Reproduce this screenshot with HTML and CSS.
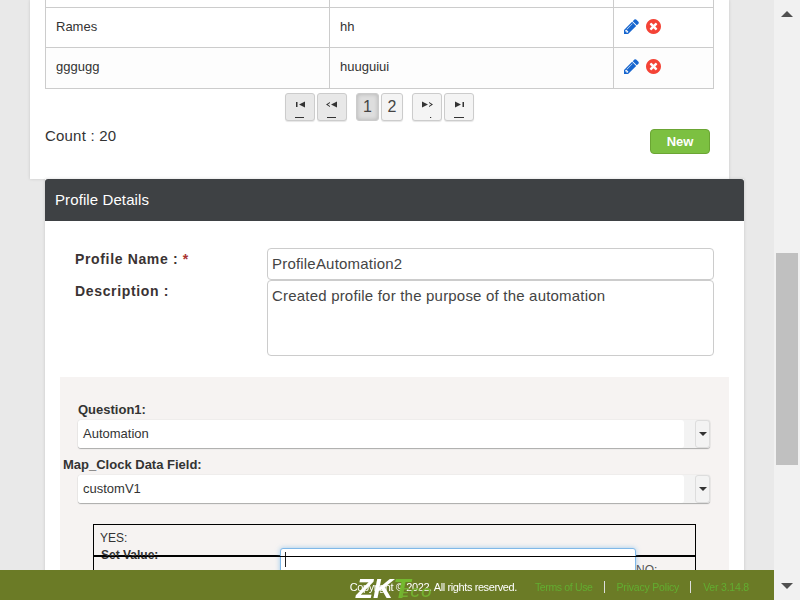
FILE: index.html
```html
<!DOCTYPE html>
<html lang="en">
<head>
  <meta charset="UTF-8">
  <meta name="viewport" content="width=device-width, initial-scale=1.0">
  <link rel="stylesheet" href="styles.css">
</head>
<body>
  <div class="layout">
    <div class="page">
      <div class="list-panel">
        <table class="grid">
          <tr class="row-cut"><td></td><td></td><td></td></tr>
          <tr>
            <td>Rames</td>
            <td>hh</td>
            <td class="actions">
              <svg class="icon pen" viewBox="128 128 1536 1536"><path d="M491 1536l91-91-235-235-91 91v107h128v128h107zm523-928q0-22-22-22-10 0-17 7l-542 542q-7 7-7 17 0 22 22 22 10 0 17-7l542-542q7-7 7-17zm-54-192l416 416-832 832h-416v-416zm683 96q0 53-37 90l-166 166-416-416 166-165q36-38 90-38 53 0 91 38l235 234q37 39 37 91z"/></svg>
              <svg class="icon del" viewBox="0 128 1536 1536"><path d="M1149 1122q0-26-19-45l-181-181 181-181q19-19 19-45 0-27-19-46l-90-90q-19-19-46-19-26 0-45 19l-181 181-181-181q-19-19-45-19-27 0-46 19l-90 90q-19 19-19 46 0 26 19 45l181 181-181 181q-19 19-19 45 0 27 19 46l90 90q19 19 46 19 26 0 45-19l181-181 181 181q19 19 45 19 27 0 46-19l90-90q19-19 19-46zm387-226q0 209-103 385.5t-279.500 279.500-385.500 103-385.500-103-279.500-279.500-103-385.500 103-385.500 279.500-279.500 385.500-103 385.500 103 279.500 279.500 103 385.500z"/></svg>
            </td>
          </tr>
          <tr>
            <td>gggugg</td>
            <td>huuguiui</td>
            <td class="actions">
              <svg class="icon pen" viewBox="128 128 1536 1536"><path d="M491 1536l91-91-235-235-91 91v107h128v128h107zm523-928q0-22-22-22-10 0-17 7l-542 542q-7 7-7 17 0 22 22 22 10 0 17-7l542-542q7-7 7-17zm-54-192l416 416-832 832h-416v-416zm683 96q0 53-37 90l-166 166-416-416 166-165q36-38 90-38 53 0 91 38l235 234q37 39 37 91z"/></svg>
              <svg class="icon del" viewBox="0 128 1536 1536"><path d="M1149 1122q0-26-19-45l-181-181 181-181q19-19 19-45 0-27-19-46l-90-90q-19-19-46-19-26 0-45 19l-181 181-181-181q-19-19-45-19-27 0-46 19l-90 90q-19 19-19 46 0 26 19 45l181 181-181 181q-19 19-19 45 0 27 19 46l90 90q19 19 46 19 26 0 45-19l181-181 181 181q19 19 45 19 27 0 46-19l90-90q19-19 19-46zm387-226q0 209-103 385.5t-279.500 279.500-385.500 103-385.500-103-279.500-279.500-103-385.500 103-385.500 279.500-279.500 385.500-103 385.500 103 279.500 279.500 103 385.500z"/></svg>
            </td>
          </tr>
        </table>
        <div class="pager">
          <span class="pager-group">
            <button class="pg-btn off"><svg viewBox="0 0 28 26"><path d="M10 8h1.500v5H10zM13 10.500l6-3v6z"/><path d="M9 23h9v1H9z"/></svg></button>
            <button class="pg-btn off"><svg viewBox="0 0 28 26"><path d="M8 10.500l4-2.500v1l-2.200 1.500L12 12v1zM13 10.500l6-3v6z"/><path d="M9 23h9v1H9z"/></svg></button>
          </span>
          <span class="pager-group">
            <button class="pg-num on">1</button>
            <button class="pg-num second">2</button>
          </span>
          <span class="pager-group">
            <button class="pg-btn"><svg viewBox="0 0 28 26"><path d="M9 7.500l6 3-6 3zM16 8l4 2.500-4 2.500v-1l2.200-1.500L16 9z"/><path d="M17 23h1.200v1H17z"/></svg></button>
            <button class="pg-btn"><svg viewBox="0 0 28 26"><path d="M10 7.500l6 3-6 3zM17.500 8H19v5h-1.500z"/><path d="M9 23h10v1H9z"/></svg></button>
          </span>
        </div>
        <div class="count-row">
          <span class="count">Count : 20</span>
          <button class="btn-new">New</button>
        </div>
      </div>

      <div class="detail-panel">
        <div class="detail-head">Profile Details</div>
        <div class="detail-body">
          <div class="form-row">
            <label class="form-label">Profile Name : <span class="req">*</span></label>
            <input class="text-input" type="text" value="ProfileAutomation2">
          </div>
          <div class="form-row">
            <label class="form-label">Description :</label>
            <textarea class="text-area">Created profile for the purpose of the automation</textarea>
          </div>
          <div class="question">
            <div class="q-label">Question1:</div>
            <div class="combo">
              <span class="combo-text">Automation</span>
              <span class="combo-arrow"></span>
            </div>
            <div class="q-label outdent">Map_Clock Data Field:</div>
            <div class="combo">
              <span class="combo-text">customV1</span>
              <span class="combo-arrow"></span>
            </div>
            <div class="answers">
              <div class="ans-top">
                <div class="ans-yes">YES:</div>
                <div class="ans-set">Set Value:</div>
              </div>
              <div class="focus-input"></div>
              <div class="ans-bottom">NO:</div>
            </div>
          </div>
        </div>
      </div>
    </div>
    <div class="scrollbar">
      <span class="arrow-up"></span>
      <span class="thumb"></span>
      <span class="arrow-down"></span>
    </div>
  </div>
  <footer class="footer">
    <span class="copy">Copyright © 2022. All rights reserved.</span>
    <a class="foot-link terms">Terms of Use</a>
    <a class="foot-link">Privacy Policy</a>
    <a class="foot-link last">Ver 3.14.8</a>
    <span class="logo"><b class="logo-zk">ZK</b><b class="logo-t">T</b><i class="logo-eco">ECO</i></span>
  </footer>
</body>
</html>
```

FILE: styles.css
```css
* {
  box-sizing: border-box;
}

html, body {
  height: 100%;
  margin: 0;
  overflow: hidden;
}

body {
  font-family: "Liberation Sans", Arial, sans-serif;
  font-size: 13px;
  color: #333;
  background-color: #e9e9e9;
}

.layout {
  display: flex;
  height: 600px;
}

.page {
  width: 774px;
  height: 600px;
  overflow: hidden;
  padding-left: 30px;
}

/* list */
.list-panel {
  width: 699px;
  height: 179px;
  padding: 0 15px;
  background-color: #fff;
  box-shadow: 0 0 3px rgba(0, 0, 0, 0.15);
}

.grid {
  width: 669px;
  table-layout: fixed;
  border-collapse: collapse;
}

.grid td {
  height: 40px;
  padding: 0 10px 2px;
  border: 1px solid #ccc;
}

.grid .row-cut td {
  height: 7px;
  padding: 0;
  border-top: 0;
}

.grid td:nth-child(1),
.grid td:nth-child(2) {
  width: 284px;
}

.grid tr:last-child td {
  height: 41px;
  padding-bottom: 3px;
  background-color: #fdfdfd;
}

.actions {
  white-space: nowrap;
}

.icon {
  width: 15px;
  height: 15px;
  vertical-align: middle;
}

.icon.pen {
  fill: #1766cf;
  margin-right: 3px;
}

.icon.del {
  fill: #f44336;
}

.pager {
  display: flex;
  justify-content: center;
  gap: 9px;
  margin-top: 4px;
}

.pager-group {
  display: flex;
  gap: 2px;
}

.pg-btn, .pg-num {
  height: 28px;
  padding: 0;
  border: 1px solid #ccc;
  border-radius: 3px;
  background-color: #f4f4f4;
  box-shadow: 0 1px 1px rgba(0, 0, 0, 0.1);
  font-family: inherit;
}

.pg-btn {
  width: 30px;
}

.pg-btn svg {
  display: block;
  width: 28px;
  height: 26px;
  fill: #333;
}

.pg-btn.off {
  background-color: #e8e8e8;
}

.pg-num {
  width: 23px;
  font-size: 16px;
  color: #444;
}

.pg-num.second {
  width: 22px;
}

.pg-num.on {
  background-color: #dedede;
  box-shadow: inset 0 0 4px rgba(0, 0, 0, 0.2);
}

.count-row {
  display: flex;
  justify-content: space-between;
  padding-right: 4px;
}

.count {
  margin-top: 6px;
  font-size: 15px;
  letter-spacing: 0.2px;
}

.btn-new {
  width: 60px;
  height: 25px;
  margin-top: 8px;
  border: 1px solid #6ba534;
  border-radius: 4px;
  background-color: #7cc041;
  color: #fff;
  font-family: inherit;
  font-size: 13px;
  font-weight: bold;
}

/* details */
.detail-panel {
  width: 699px;
  height: 421px;
  margin-left: 15px;
  background-color: #fff;
  box-shadow: 0 0 3px rgba(0, 0, 0, 0.15);
}

.detail-head {
  height: 42px;
  padding: 12px 10px 0;
  border-radius: 3px 3px 0 0;
  background-color: #3e4144;
  color: #fff;
  font-size: 15px;
  letter-spacing: 0.1px;
}

.detail-body {
  padding: 27px 15px 0;
}

.form-row {
  display: flex;
  padding-left: 15px;
}

.form-label {
  width: 192px;
  padding-top: 3px;
  font-size: 14px;
  font-weight: bold;
  letter-spacing: 0.65px;
  color: #3a3333;
}

.req {
  color: #a33;
}

.text-input, .text-area {
  width: 447px;
  border: 1px solid #ccc;
  border-radius: 4px;
  padding: 0 4px;
  font-family: inherit;
  font-size: 15px;
  color: #444;
  letter-spacing: 0.2px;
}

.text-input {
  height: 32px;
  padding-bottom: 2px;
}

.text-area {
  display: block;
  height: 76px;
  padding-top: 6px;
  resize: none;
}

.question {
  height: 300px;
  margin-top: 21px;
  padding: 25px 18px 0;
  background-color: #f6f3f2;
}

.q-label {
  margin-bottom: 3px;
  font-size: 13px;
  font-weight: bold;
  line-height: 15px;
}

.q-label.outdent {
  margin: 9px 0 3px -15px;
}

.combo {
  position: relative;
  display: flex;
  width: 632px;
  height: 28px;
  border-radius: 3px;
  background-color: #f3f3f3;
  box-shadow: 0 1px 1px #aaa, 0 0 1px #bbb;
}

.combo-text {
  width: 606px;
  padding: 6px 5px;
  border-radius: 3px;
  background-color: #fff;
  font-size: 13px;
}

.combo-arrow {
  position: absolute;
  top: 0;
  right: 0;
  width: 15px;
  height: 28px;
  border: 1px solid #ddd;
  border-radius: 3px;
  background-color: #f3f3f3;
}

.combo-arrow::after {
  content: "";
  position: absolute;
  top: 11px;
  left: 3px;
  border: 4px solid transparent;
  border-top: 4px solid #333;
  border-bottom: 0;
}

.answers {
  position: relative;
  width: 603px;
  height: 80px;
  margin: 21px 0 0 15px;
  border: 1px solid #000;
  font-size: 12px;
}

.ans-top {
  height: 31px;
  padding: 6px 6px 0;
  border-bottom: 1px solid #000;
}

.ans-yes {
  line-height: 14px;
}

.ans-set {
  margin: 3px 0 0 1px;
  font-weight: bold;
  line-height: 14px;
}

.focus-input {
  position: absolute;
  top: 23px;
  left: 186px;
  width: 356px;
  height: 40px;
  border: 1px solid #80b8e8;
  border-radius: 3px;
  background-color: #fff;
  box-shadow: 0 0 5px rgba(102, 175, 233, 0.6);
}

.focus-input::before {
  content: "";
  position: absolute;
  top: 3px;
  left: 4px;
  width: 1px;
  height: 15px;
  background-color: #222;
}

.ans-bottom {
  position: relative;
  padding: 6px 0 0 542px;
  border-top: 1px solid #000;
  color: #555;
}

/* footer over page */
.footer {
  position: fixed;
  left: 0;
  bottom: 0;
  display: flex;
  align-items: center;
  justify-content: flex-end;
  width: 774px;
  height: 30px;
  padding: 3px 25px 0 0;
  background-color: #6b7b26;
  font-size: 10.5px;
  letter-spacing: -0.2px;
}

.copy {
  margin-right: 18px;
  color: #fff;
  font-size: 11px;
  letter-spacing: -0.4px;
}

.foot-link {
  margin-right: 12px;
  padding-right: 11px;
  border-right: 1px solid #ddd;
  color: #62ad30;
}

.foot-link.terms {
  letter-spacing: -0.35px;
}

.foot-link.last {
  margin-right: 0;
  padding-right: 0;
  border-right: 0;
}

.logo {
  position: absolute;
  top: 8px;
  left: 356px;
  display: flex;
  letter-spacing: 0;
  font-style: italic;
  line-height: 22px;
}

.logo-zk {
  color: #fff;
  font-size: 28px;
}

.logo-t {
  color: #74b92f;
  font-size: 28px;
}

.logo-eco {
  position: absolute;
  top: 8px;
  left: 44px;
  color: #74b030;
  font-size: 13px;
  font-weight: bold;
  letter-spacing: 1.5px;
  line-height: 13px;
}

.scrollbar {
  display: flex;
  flex-direction: column;
  align-items: center;
  width: 26px;
  background-color: #f1f1f1;
}

.scrollbar span {
  display: block;
}

.arrow-up {
  margin-top: 11px;
  border: 6px solid transparent;
  border-top: 0;
  border-bottom-color: #505050;
}

.thumb {
  width: 22px;
  height: 212px;
  margin-top: 236px;
  background-color: #c0c0c0;
}

.arrow-down {
  margin-top: auto;
  margin-bottom: 11px;
  border: 6px solid transparent;
  border-bottom: 0;
  border-top-color: #505050;
}
```
